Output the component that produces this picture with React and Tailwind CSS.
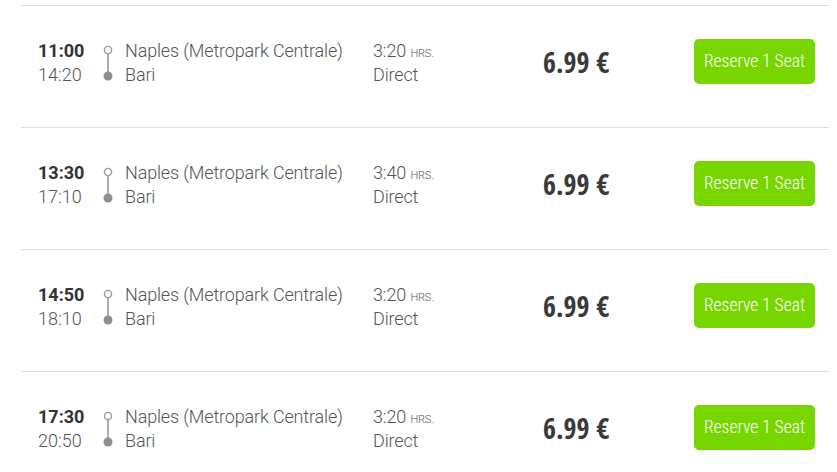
const trips = [
  { dep: "11:00", arr: "14:20", dur: "3:20" },
  { dep: "13:30", arr: "17:10", dur: "3:40" },
  { dep: "14:50", arr: "18:10", dur: "3:20" },
  { dep: "17:30", arr: "20:50", dur: "3:20" },
];

const RouteIcon = () => (
  <svg width="12" height="42" viewBox="0 0 12 42" className="mt-[4px]">
    <circle cx="6" cy="7" r="3.6" fill="white" stroke="#9a9a9a" strokeWidth="1.4" />
    <line x1="6" y1="10.5" x2="6" y2="30" stroke="#9a9a9a" strokeWidth="1.6" />
    <circle cx="6" cy="33" r="4.5" fill="#8e8e8e" />
  </svg>
);

const TripRow = ({ trip }) => (
  <div className="h-[122px] border-t border-[#dedede] flex items-start pt-[33px]">
    {/* departure / arrival */}
    <div className="w-[64px] ml-[17px] text-[18px] leading-[24px] text-[#555]">
      <div className="font-bold text-[#333]">{trip.dep}</div>
      <div className="font-light">{trip.arr}</div>
    </div>
    <RouteIcon />
    {/* stations */}
    <div className="ml-[11px] w-[248px] text-[18px] leading-[24px] font-light text-[#555] tracking-[-0.15px]">
      <div>Naples (Metropark Centrale)</div>
      <div>Bari</div>
    </div>
    {/* duration */}
    <div className="w-[170px] text-[18px] leading-[24px] font-light text-[#555] tracking-[-0.15px]">
      <div>
        {trip.dur} <span className="text-[11px] leading-none uppercase">hrs.</span>
      </div>
      <div>Direct</div>
    </div>
    {/* price */}
    <div className="w-[151px] mt-[9px] text-[28px] font-bold text-[#3a3a3a] leading-none font-['Open_Sans_Condensed',Roboto,sans-serif]">
      6.99 €
    </div>
    <button className="w-[121px] h-[45px] rounded-[5px] bg-[#77d600] text-white text-[17.5px] font-light [font-stretch:condensed]">
      Reserve 1 Seat
    </button>
  </div>
);

export default function App() {
  return (
    <div className="h-[472px] overflow-hidden bg-white pt-[5px] font-['Roboto',sans-serif]">
      <div className="ml-[21px] w-[808px]">
        {trips.map((t) => (
          <TripRow key={t.dep} trip={t} />
        ))}
      </div>
    </div>
  );
}
